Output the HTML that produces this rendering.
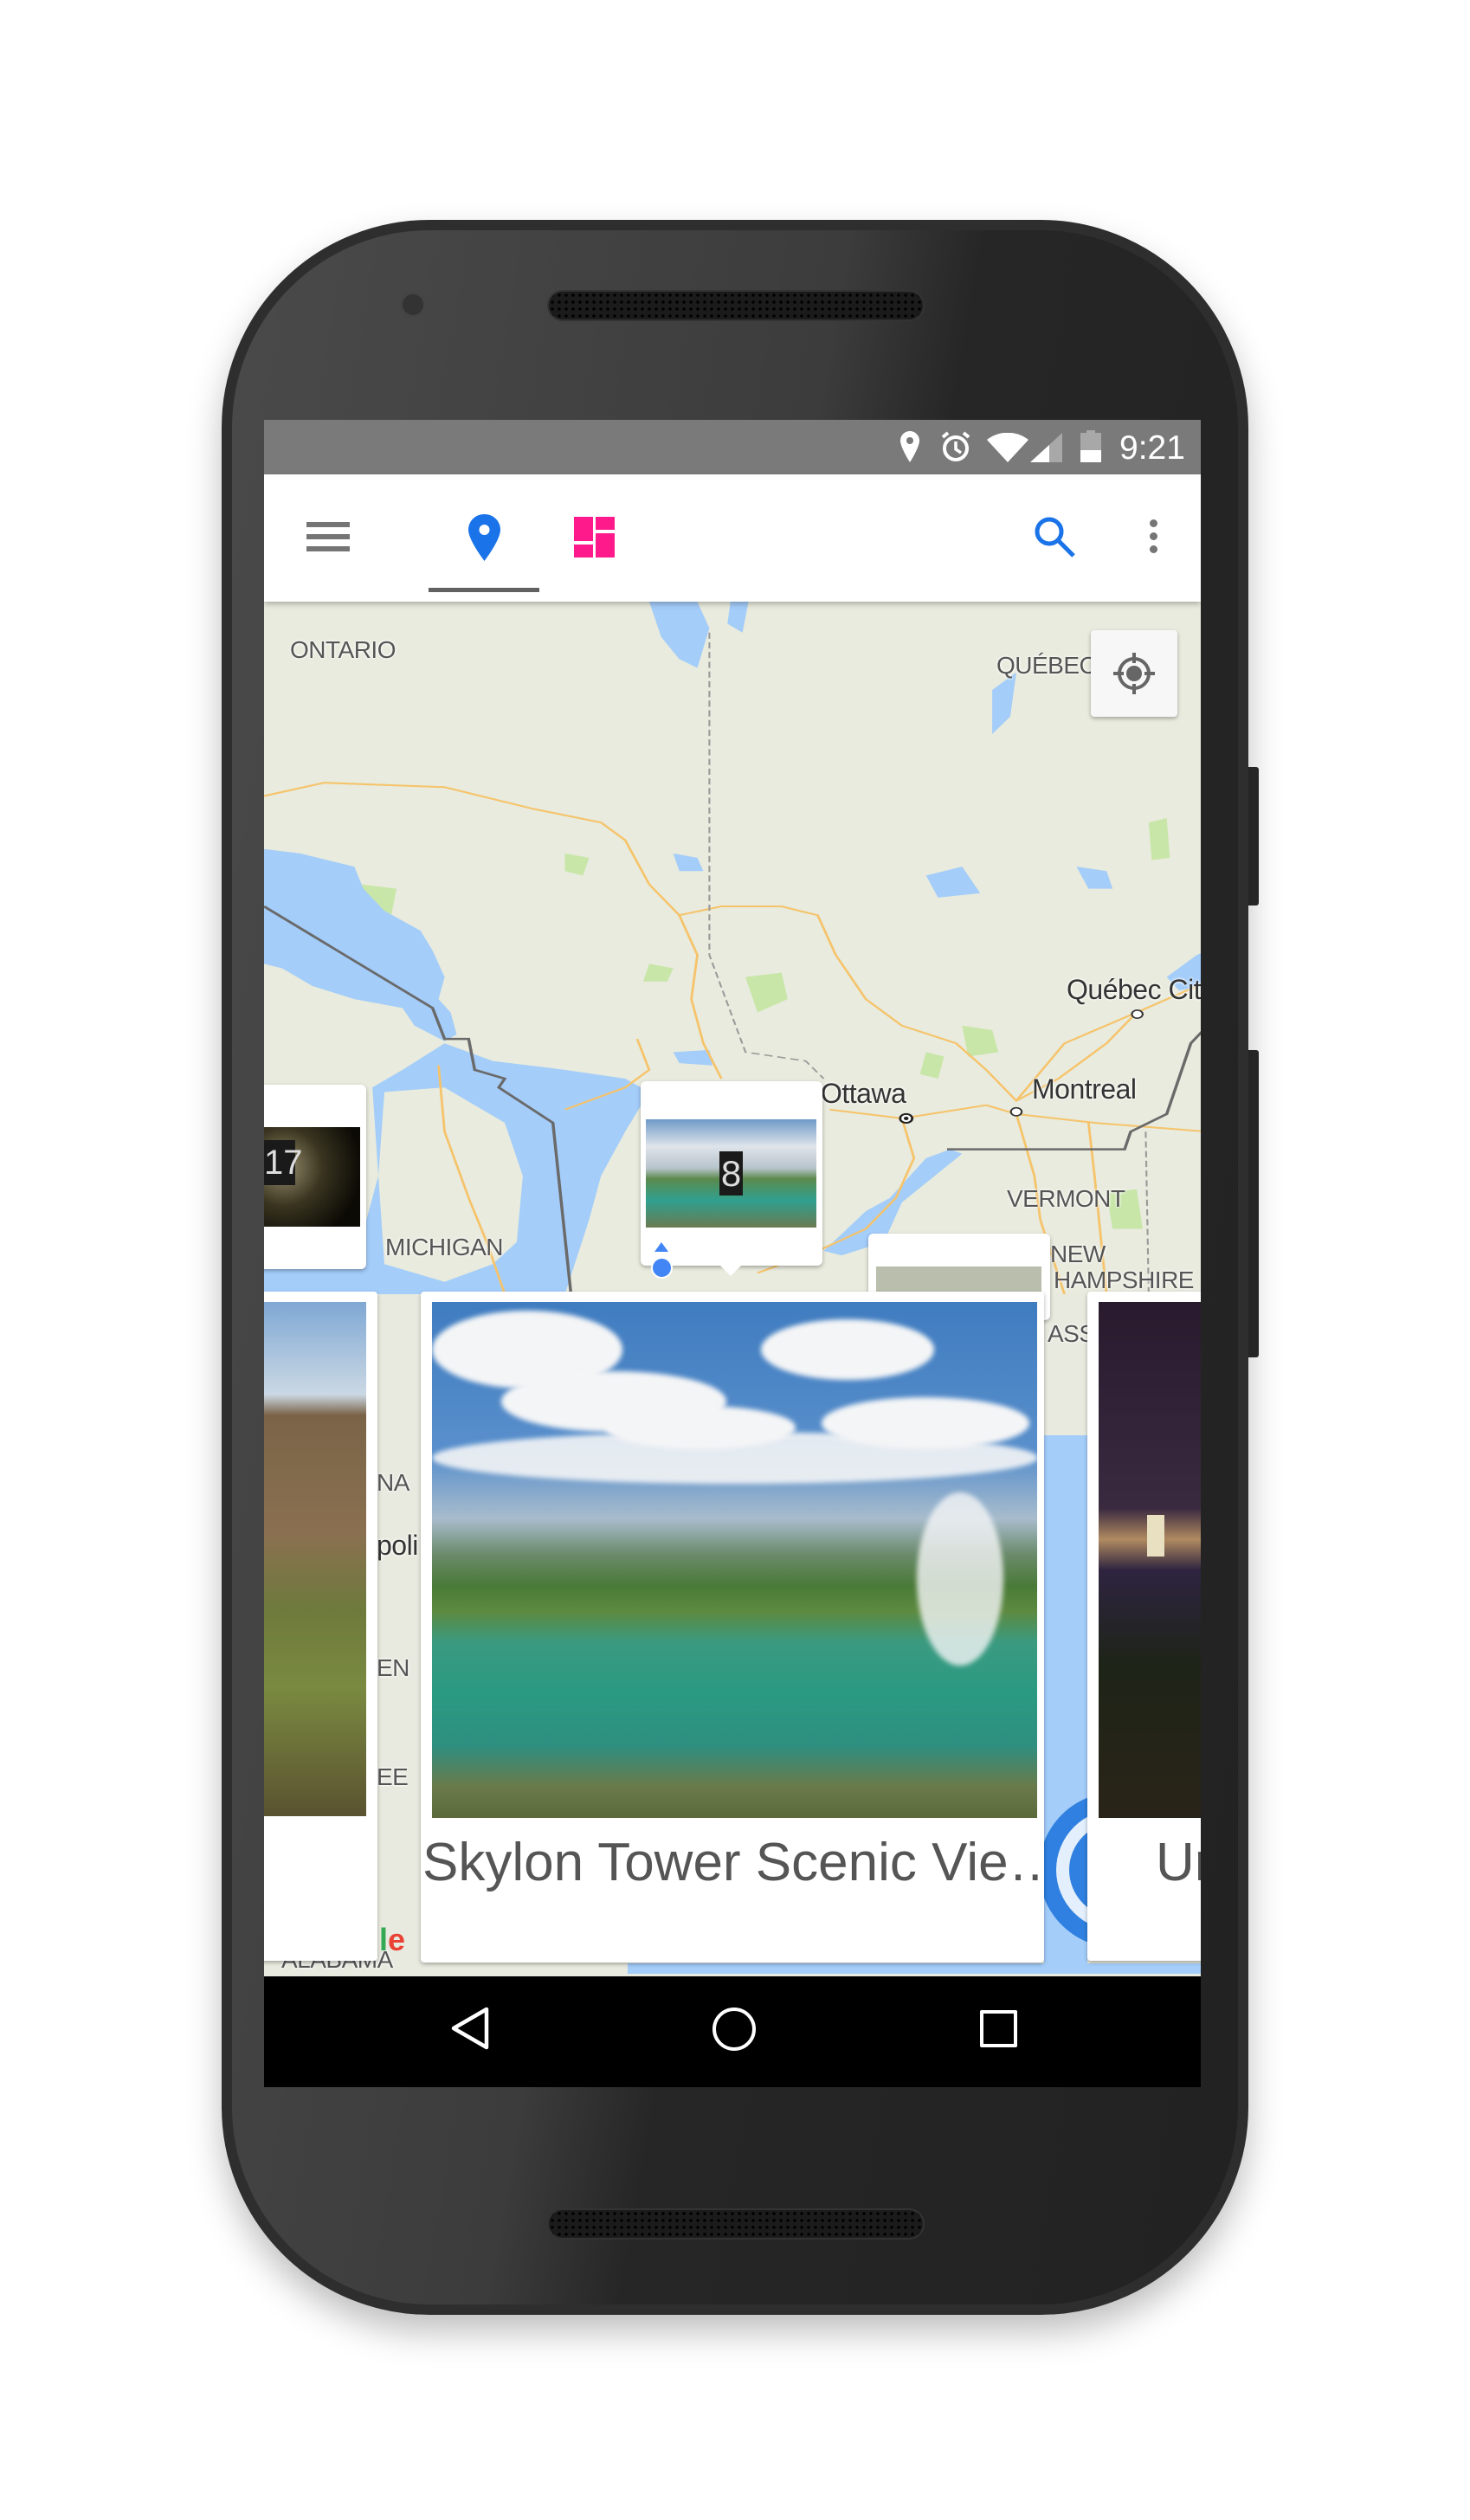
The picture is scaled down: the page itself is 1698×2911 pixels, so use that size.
<!DOCTYPE html>
<html><head><meta charset="utf-8"><style>
*{margin:0;padding:0;box-sizing:border-box}
body{width:1698px;height:2911px;background:#fff;position:relative;overflow:hidden;font-family:"Liberation Sans",sans-serif}
.abs{position:absolute}
.phone{left:256px;top:254px;width:1186px;height:2420px;border-radius:240px;background:linear-gradient(100deg,#4a4a4a 0%,#3c3c3c 45%,#262626 55%,#222 100%);box-shadow:0 20px 40px rgba(0,0,0,.25);border:12px solid #2e2e2e}
.btn{background:#2a2a2a;border-radius:3px}
.speaker{border-radius:22px;background:#1b1b1b;background-image:radial-gradient(#000 1.5px,transparent 2px);background-size:8px 8px;border:2px solid #333}
.screen{left:305px;top:485px;width:1082px;height:1926px;background:#e8eadf;overflow:hidden}
.status{left:0;top:0;width:1082px;height:63px;background:#7a7a7a}
.toolbar{left:0;top:63px;width:1082px;height:147px;background:#fff;box-shadow:0 3px 6px rgba(0,0,0,.25);z-index:5}
.lbl{position:absolute;font-size:28px;color:#555;letter-spacing:-0.5px;white-space:nowrap;text-shadow:0 0 3px #fff,0 0 3px #fff}
.card{position:absolute;background:#fff;border-radius:6px;box-shadow:0 2px 5px rgba(0,0,0,.3)}
.nav{left:0;top:1798px;width:1082px;height:128px;background:#000;z-index:6}
.cl{position:absolute;background:#f4f5f6;border-radius:50%;filter:blur(3px)}
</style></head><body>
<div class="abs btn" style="left:1438px;top:886px;width:16px;height:160px"></div>
<div class="abs btn" style="left:1438px;top:1213px;width:16px;height:355px"></div>
<div class="abs phone"></div>
<div class="abs" style="left:462px;top:337px;width:30px;height:30px;border-radius:50%;background:#333;border:3px solid #444"></div>
<div class="abs speaker" style="left:632px;top:335px;width:436px;height:36px"></div>
<div class="abs speaker" style="left:632px;top:2551px;width:436px;height:36px"></div>

<div class="abs screen">
 <svg class="abs" style="left:0;top:210px" width="1090" height="800" viewBox="0 0 1568 1568" preserveAspectRatio="none">
  <rect width="1568" height="1568" fill="#e8ebdd"/>
  <g fill="#c8e6a8">
   <path d="M160,640 L220,650 210,720 170,700Z"/><path d="M500,570 L540,580 530,620 500,610Z"/><path d="M800,850 L860,840 870,900 820,930Z"/><path d="M1470,500 L1500,490 1505,580 1475,585Z"/><path d="M1160,960 L1210,970 1220,1020 1170,1030Z"/><path d="M640,820 L680,830 670,860 630,860Z"/><path d="M1400,1340 L1450,1330 1460,1420 1410,1420Z"/><path d="M1100,1020 L1130,1030 1120,1080 1090,1070Z"/>
  </g>
  <g fill="#a4cdfa">
   <path d="M0,560 L60,570 150,600 165,650 200,700 260,745 280,790 300,850 290,900 310,930 320,980 300,995 250,960 230,920 150,900 80,870 30,830 0,820Z"/>
   <path d="M300,1000 L380,1040 500,1060 600,1080 640,1110 600,1200 560,1300 540,1400 500,1568 L150,1568 160,1450 190,1300 180,1100 230,1060Z"/>
   <path d="M640,0 L720,0 740,60 720,150 690,130 660,80Z"/><path d="M775,0 L805,0 795,70 770,50Z"/>
   <path d="M930,1470 L1000,1380 1040,1350 1100,1260 1140,1240 1160,1250 1060,1360 1030,1450 960,1480Z"/>
   <path d="M1500,850 L1550,800 1568,790 1568,870 1520,880Z"/>
   <path d="M1350,600 L1400,610 1410,650 1370,650Z"/><path d="M1100,620 L1160,600 1190,660 1120,670Z"/><path d="M680,570 L720,580 730,610 690,610Z"/>
   <path d="M1210,200 L1250,160 1240,260 1210,300Z"/><path d="M0,1510 L160,1510 150,1568 0,1568Z"/>
   <path d="M680,1020 L740,1015 745,1050 690,1045Z"/>
  </g>
  <path d="M200,1110 L300,1100 400,1180 430,1300 420,1450 380,1500 300,1540 200,1500 190,1300Z" fill="#e8ebdd"/>
  <g fill="none" stroke="#f6c36a" stroke-width="4">
   <path d="M0,440 L100,410 300,420 450,470 560,500 600,540 640,640 690,710 760,690 860,690 920,710 950,800 1000,900 1060,960 1150,1000 1200,1060 1250,1130 1320,1080 1400,1000 1450,930 1568,860"/>
   <path d="M290,1050 L300,1200 340,1350 370,1450 400,1568"/>
   <path d="M620,990 L640,1060 600,1100 500,1150"/>
   <path d="M940,1150 L1060,1170 1200,1140 1250,1160 1380,1180 1568,1200"/>
   <path d="M1060,1170 L1080,1260 1050,1350 1000,1420 920,1470 820,1520"/>
   <path d="M1250,1160 L1280,1300 1290,1400 1330,1568"/>
   <path d="M1250,1130 L1330,1000 1450,930"/>
   <path d="M1370,1180 L1380,1300 1400,1568"/>
   <path d="M690,710 L720,800 710,900 730,1000 760,1080"/>
  </g>
  <g fill="none" stroke="#6a6a6a" stroke-width="5">
   <path d="M0,690 L280,920 300,990 340,990 350,1060 400,1080 390,1100 480,1180 510,1568"/>
   <path d="M1135,1240 L1430,1240 1440,1200 1500,1160 1520,1080 1540,1000 1568,960"/>
  </g>
  <path d="M740,70 L740,800 800,1020 900,1040 930,1080" fill="none" stroke="#999" stroke-width="3" stroke-dasharray="14,8"/>
  <path d="M1465,1200 L1470,1568" fill="none" stroke="#999" stroke-width="3" stroke-dasharray="14,8"/>
  <circle cx="1067" cy="1170" r="10" fill="#fff" stroke="#222" stroke-width="4"/><circle cx="1067" cy="1170" r="4" fill="#222"/>
  <circle cx="1250" cy="1155" r="9" fill="#fff" stroke="#333" stroke-width="3"/>
  <circle cx="1451" cy="934" r="9" fill="#fff" stroke="#333" stroke-width="3"/>
 </svg>
 <div class="abs" style="left:901px;top:1173px;width:50px;height:620px;background:#a4cdfa"></div>
 <div class="abs" style="left:420px;top:1783px;width:662px;height:12px;background:#a4cdfa"></div>
 <div class="lbl" style="left:30px;top:250px">ONTARIO</div>
 <div class="lbl" style="left:846px;top:268px">QUÉBEC</div>
 <div class="lbl" style="left:927px;top:640px;font-size:32px;color:#333">Québec City</div>
 <div class="lbl" style="left:643px;top:760px;font-size:32px;color:#333">Ottawa</div>
 <div class="lbl" style="left:887px;top:755px;font-size:32px;color:#333">Montreal</div>
 <div class="lbl" style="left:858px;top:884px">VERMONT</div>
 <div class="lbl" style="left:908px;top:948px">NEW</div>
 <div class="lbl" style="left:912px;top:978px">HAMPSHIRE</div>
 <div class="lbl" style="left:140px;top:940px">MICHIGAN</div>
 <div class="lbl" style="left:905px;top:1040px">ASS.</div>
 <div class="lbl" style="left:130px;top:1212px">NA</div>
 <div class="lbl" style="left:130px;top:1282px;font-size:32px;color:#333">poli</div>
 <div class="lbl" style="left:130px;top:1426px">EN</div>
 <div class="lbl" style="left:130px;top:1552px">EE</div>
 <div class="lbl" style="left:20px;top:1763px">ALABAMA</div>
 <div class="abs" style="left:133px;top:1735px;font-size:36px;font-weight:bold"><span style="color:#34a853">l</span><span style="color:#ea4335">e</span></div>
 <div class="card" style="left:955px;top:243px;width:100px;height:100px;border-radius:4px;background:#f7f7f7">
  <svg width="100" height="100" viewBox="0 0 100 100"><circle cx="50" cy="50" r="17" fill="none" stroke="#666" stroke-width="4"/><circle cx="50" cy="50" r="9" fill="#666"/><path d="M50,26V38M50,62V74M26,50H38M62,50H74" stroke="#666" stroke-width="4"/></svg>
 </div>
 <div class="card" style="left:-10px;top:768px;width:128px;height:213px"></div>
 <div class="abs" style="left:0;top:817px;width:111px;height:115px;background:radial-gradient(circle at 20% 40%,#9a9070,#3a3520 40%,#0c0a05 80%)"></div>
 <div class="abs" style="left:0;top:832px;width:36px;height:52px;background:#1a1a1a;color:#ddd;font-size:40px;line-height:52px">17</div>
 <div class="card" style="left:435px;top:764px;width:210px;height:213px"></div>
 <div class="abs" style="left:525px;top:975px;width:0;height:0;border-left:14px solid transparent;border-right:14px solid transparent;border-top:14px solid #fff"></div>
 <div class="abs" style="left:441px;top:808px;width:197px;height:125px;background:linear-gradient(180deg,#6e9ac8 0%,#dfe4ea 25%,#b8c4cc 45%,#5b8a4c 55%,#30a090 75%,#6a7a50 100%)"></div>
 <div class="abs" style="left:526px;top:845px;width:27px;height:51px;background:#1a1a1a;color:#ddd;font-size:42px;line-height:51px;text-align:center">8</div>
 <div class="abs" style="left:447px;top:967px;width:25px;height:25px;border-radius:50%;background:#4285f4;border:2px solid #fff"></div>
 <div class="abs" style="left:451px;top:950px;width:0;height:0;border-left:8px solid transparent;border-right:8px solid transparent;border-bottom:11px solid #4285f4"></div>
 <div class="card" style="left:698px;top:940px;width:210px;height:100px"></div>
 <div class="abs" style="left:707px;top:978px;width:191px;height:70px;background:#b9bfac"></div>
 <div class="abs" style="left:895px;top:1585px;width:180px;height:180px;border-radius:50%;background:#2f80e0"></div>
 <div class="abs" style="left:915px;top:1605px;width:140px;height:140px;border-radius:50%;background:#e3effd"></div>
 <div class="abs" style="left:930px;top:1620px;width:110px;height:110px;border-radius:50%;background:#2f80e0"></div>
 <div class="card" style="left:-10px;top:1007px;width:141px;height:773px;border-radius:4px"></div>
 <div class="abs" style="left:0;top:1019px;width:118px;height:594px;background:linear-gradient(180deg,#7fa8d4 0%,#cbd8e4 18%,#7a6448 22%,#8a7050 45%,#6e7a3c 60%,#7a8a40 75%,#5a5230 100%)"></div>
 <div class="card" style="left:181px;top:1007px;width:720px;height:775px;border-radius:4px"></div>
 <div class="abs" style="left:194px;top:1019px;width:699px;height:596px;overflow:hidden;background:linear-gradient(180deg,#3f7cc0 0%,#5a90cc 30%,#a8bccc 42%,#6a8a6a 49%,#4a7a38 55%,#5d8a40 60%,#3a9a80 66%,#2a9a82 76%,#2f8f80 86%,#6a7a4a 94%,#5a6a3a 100%)">
  <div class="cl" style="left:0;top:10px;width:220px;height:90px"></div>
  <div class="cl" style="left:80px;top:80px;width:260px;height:70px"></div>
  <div class="cl" style="left:380px;top:20px;width:200px;height:70px"></div>
  <div class="cl" style="left:450px;top:110px;width:240px;height:60px"></div>
  <div class="cl" style="left:0;top:150px;width:700px;height:60px;opacity:.9"></div>
  <div class="cl" style="left:200px;top:120px;width:220px;height:50px"></div>
  <div class="cl" style="left:560px;top:220px;width:100px;height:200px;opacity:.8"></div>
 </div>
 <div class="abs" style="left:183px;top:1627px;width:720px;font-size:62px;color:#555;white-space:nowrap;overflow:hidden;line-height:80px">Skylon Tower Scenic Vie…</div>
 <div class="card" style="left:951px;top:1007px;width:140px;height:773px;border-radius:4px"></div>
 <div class="abs" style="left:964px;top:1019px;width:118px;height:596px;background:linear-gradient(180deg,#2a1a2e 0%,#3a2a40 40%,#b08a60 46%,#2e2440 52%,#1e2418 70%,#2a2418 100%)"></div>
 <div class="abs" style="left:1020px;top:1265px;width:20px;height:48px;background:#e8e0c0"></div>
 <div class="abs" style="left:1030px;top:1627px;font-size:62px;color:#555;line-height:80px">Ur</div>
 <div class="abs status">
  <svg class="abs" style="left:735px;top:13px" width="22" height="36" viewBox="0 0 22 36"><path d="M11,0C5,0 0,5 0,11C0,19 11,36 11,36C11,36 22,19 22,11C22,5 17,0 11,0Z" fill="#fff"/><circle cx="11" cy="11" r="4" fill="#7a7a7a"/></svg>
  <svg class="abs" style="left:780px;top:12px" width="38" height="38" viewBox="0 0 38 38"><circle cx="19" cy="21" r="13" fill="none" stroke="#fff" stroke-width="4"/><path d="M19,13V22L25,26" fill="none" stroke="#fff" stroke-width="3.5"/><path d="M4,8L10,3M34,8L28,3" stroke="#fff" stroke-width="4"/></svg>
  <svg class="abs" style="left:835px;top:15px" width="48" height="34" viewBox="0 0 48 34"><path d="M0,8C14,-3 34,-3 48,8L24,34Z" fill="#fff"/></svg>
  <svg class="abs" style="left:885px;top:15px" width="37" height="34" viewBox="0 0 37 34"><path d="M37,0V34H0Z" fill="#a8a8a8"/><path d="M22,14V34H0Z" fill="#fff"/></svg>
  <div class="abs" style="left:943px;top:15px;width:24px;height:34px;background:#a8a8a8"></div>
  <div class="abs" style="left:950px;top:12px;width:10px;height:4px;background:#a8a8a8"></div>
  <div class="abs" style="left:943px;top:35px;width:24px;height:14px;background:#fff"></div>
  <div class="abs" style="left:988px;top:11px;color:#fff;font-size:39px">9:21</div>
 </div>
 <div class="abs toolbar">
  <div class="abs" style="left:49px;top:55px;width:50px;height:6px;background:#757575"></div>
  <div class="abs" style="left:49px;top:69px;width:50px;height:6px;background:#757575"></div>
  <div class="abs" style="left:49px;top:83px;width:50px;height:6px;background:#757575"></div>
  <svg class="abs" style="left:236px;top:46px" width="37" height="54" viewBox="0 0 37 54"><path d="M18.5,0C8,0 0,8 0,18C0,30 18.5,54 18.5,54C18.5,54 37,30 37,18C37,8 29,0 18.5,0Z" fill="#1a73e8"/><circle cx="18.5" cy="18" r="6" fill="#fff"/></svg>
  <div class="abs" style="left:190px;top:131px;width:128px;height:5px;background:#616161"></div>
  <div class="abs" style="left:358px;top:49px;width:22px;height:28px;background:#ff1a8c"></div>
  <div class="abs" style="left:358px;top:81px;width:22px;height:15px;background:#ff1a8c"></div>
  <div class="abs" style="left:383px;top:49px;width:22px;height:15px;background:#ff1a8c"></div>
  <div class="abs" style="left:383px;top:68px;width:22px;height:28px;background:#ff1a8c"></div>
  <svg class="abs" style="left:889px;top:48px" width="50" height="50" viewBox="0 0 50 50"><circle cx="18" cy="18" r="14" fill="none" stroke="#1a73e8" stroke-width="5"/><path d="M28,28L46,46" stroke="#1a73e8" stroke-width="5"/></svg>
  <div class="abs" style="left:1023px;top:52px;width:9px;height:9px;border-radius:50%;background:#757575"></div>
  <div class="abs" style="left:1023px;top:67px;width:9px;height:9px;border-radius:50%;background:#757575"></div>
  <div class="abs" style="left:1023px;top:82px;width:9px;height:9px;border-radius:50%;background:#757575"></div>
 </div>
 <div class="abs nav">
  <svg class="abs" style="left:215px;top:34px" width="48" height="52" viewBox="0 0 48 52"><path d="M42,4V48L4,26Z" fill="none" stroke="#fff" stroke-width="4.5" stroke-linejoin="round"/></svg>
  <div class="abs" style="left:518px;top:36px;width:50px;height:50px;border-radius:50%;border:4.5px solid #fff"></div>
  <div class="abs" style="left:827px;top:39px;width:43px;height:43px;border:4.5px solid #fff;border-radius:2px"></div>
 </div>
</div>
</body></html>
